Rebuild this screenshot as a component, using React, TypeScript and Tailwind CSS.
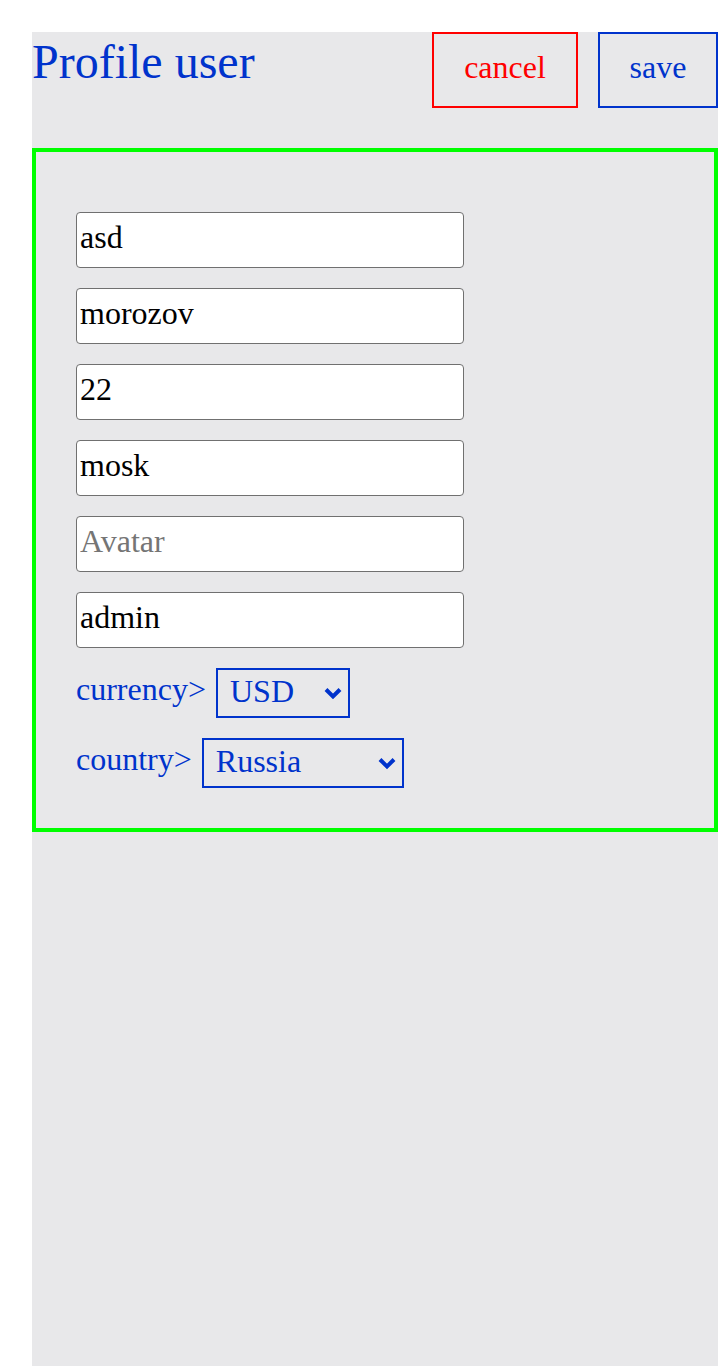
import React from "react";

const serif = "font-['Liberation_Serif','Times_New_Roman',serif]";

function Chevron() {
  return (
    <svg width="20" height="13" viewBox="0 0 20 13" className="pointer-events-none absolute right-[7px] top-1/2 -translate-y-1/2">
      <path d="M3 3 L10 10 L17 3" fill="none" stroke="#0033cc" strokeWidth="4" strokeLinecap="butt" strokeLinejoin="miter" />
    </svg>
  );
}

function Select({ value, options, width }: { value: string; options: string[]; width: string }) {
  return (
    <div className={`relative ${width} h-[50px]`}>
      <select
        defaultValue={value}
        className={`${serif} w-full h-full appearance-none bg-transparent border-2 border-[#0033cc] text-[#0033cc] text-[32px] leading-[1.15] pl-[12px] pt-0 pb-[4px] outline-none`}
      >
        {options.map((o) => (
          <option key={o} value={o}>
            {o}
          </option>
        ))}
      </select>
      <Chevron />
    </div>
  );
}

function Field({ value, placeholder }: { value?: string; placeholder: string }) {
  return (
    <input
      defaultValue={value}
      placeholder={placeholder}
      className={`${serif} w-[388px] h-[56px] bg-white border border-[#707070] rounded-[4px] px-[3px] pb-[6px] text-[32px] text-black placeholder:text-[#757575] outline-none`}
    />
  );
}

export default function App() {
  return (
    <div className={`${serif} min-h-screen bg-white pl-8 pt-8`}>
      <div className="bg-[#e8e8ea] min-h-[1334px]">
        <div className="flex justify-between items-start">
          <h1 className="text-[48px] leading-[1.15] text-[#0033cc] pt-[2px]">Profile user</h1>
          <div className="flex gap-5">
            <button className="h-[76px] w-[146px] border-2 border-[#ff0000] text-[#ff0000] text-[32px] bg-transparent pb-[6px]">
              cancel
            </button>
            <button className="h-[76px] w-[120px] border-2 border-[#0033cc] text-[#0033cc] text-[32px] bg-transparent pb-[6px]">
              save
            </button>
          </div>
        </div>
        <form className="mt-10 border-4 border-[#00ff00] px-10 pt-[60px] pb-10 flex flex-col gap-5">
          <Field value="asd" placeholder="Name" />
          <Field value="morozov" placeholder="Lastname" />
          <Field value="22" placeholder="Age" />
          <Field value="mosk" placeholder="City" />
          <Field placeholder="Avatar" />
          <Field value="admin" placeholder="Username" />
          <div className="flex items-center gap-[10px]">
            <span className="text-[32px] text-[#0033cc] leading-[1.15] -mt-[8px]">currency&gt;</span>
            <Select value="USD" options={["USD", "EUR", "RUB"]} width="w-[134px]" />
          </div>
          <div className="flex items-center gap-[10px]">
            <span className="text-[32px] text-[#0033cc] leading-[1.15] -mt-[8px]">country&gt;</span>
            <Select value="Russia" options={["Russia", "Belarus", "Ukraine", "Kazahstan", "Armenia"]} width="w-[202px]" />
          </div>
        </form>
      </div>
    </div>
  );
}
